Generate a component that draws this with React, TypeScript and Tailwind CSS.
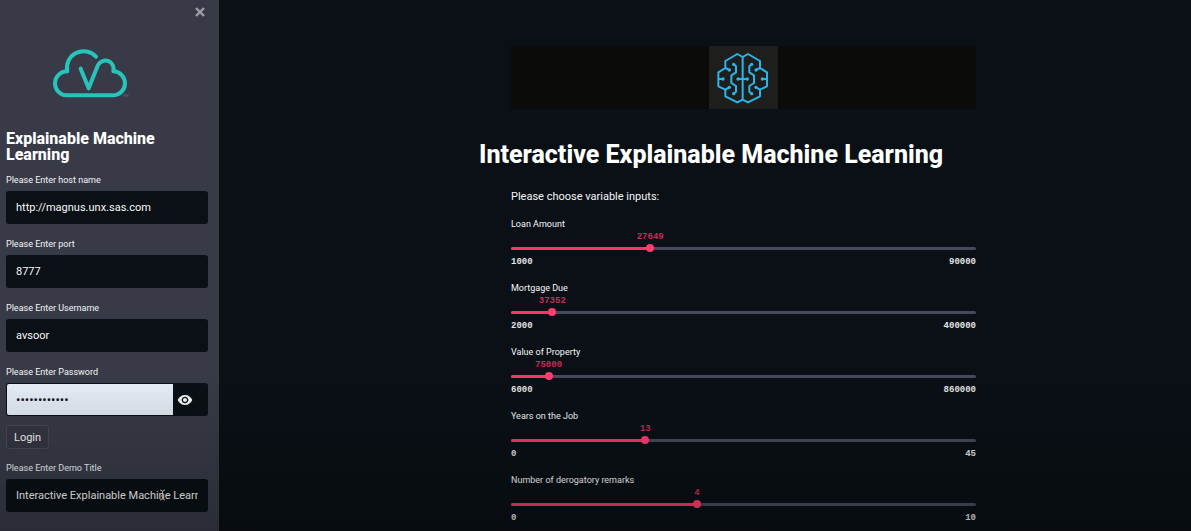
import { useState } from "react";
import { MdVisibility } from "react-icons/md";

const sliders = [
  { id: "loan", label: "Loan Amount", min: 1000, max: 90000, value: 27649 },
  { id: "mortgage", label: "Mortgage Due", min: 2000, max: 400000, value: 37352 },
  { id: "property", label: "Value of Property", min: 6000, max: 860000, value: 75000 },
  { id: "years", label: "Years on the Job", min: 0, max: 45, value: 13 },
  { id: "remarks", label: "Number of derogatory remarks", min: 0, max: 10, value: 4 },
];

function CloudLogo() {
  return (
    <svg viewBox="150 140 240 159" className="h-[53px] w-20" fill="none" aria-hidden="true">
      <path
        d="M288 169A50 50 0 0 0 202 213A36 36 0 0 0 200 285H338A36 36 0 0 0 340 213A25 25 0 0 0 294 194L266 264L242 205"
        stroke="#26c4bb"
        strokeWidth="12"
        strokeLinecap="round"
        strokeLinejoin="round"
      />
      <path d="M370 283H376M373 283V290M378 290V283L381 287L384 283V290" stroke="#6f727d" strokeWidth="1.5" />
    </svg>
  );
}

function BrainHalf() {
  return (
    <>
      <path d="M127 52L111 43L75 64V85L54 98V140L75 150V170L111 188L127 180" />
      <path d="M75 85L87 91M75 150L87 143M54 118H68M127 118H113" />
      <path d="M100 74L107 80V98L93 107V130L107 139V156L100 162" />
      <g fill="#2ab4ea" stroke="none">
        <circle cx="87" cy="91" r="5" />
        <circle cx="87" cy="143" r="5" />
        <circle cx="68" cy="118" r="5" />
        <circle cx="113" cy="118" r="5" />
        <circle cx="100" cy="74" r="5" />
        <circle cx="100" cy="162" r="5" />
      </g>
    </>
  );
}

function BrainLogo() {
  return (
    <svg
      viewBox="50 34 162 162"
      className="size-[54px]"
      fill="none"
      stroke="#2ab4ea"
      strokeWidth="6"
      strokeLinejoin="round"
      aria-hidden="true"
    >
      <path d="M127 52V180" />
      <BrainHalf />
      <g transform="translate(254 0) scale(-1 1)">
        <BrainHalf />
      </g>
    </svg>
  );
}

function Field({ id, label, value }: { id: string; label: string; value: string }) {
  return (
    <div className="flex flex-col gap-[5px]">
      <label htmlFor={id} className="text-[9px] leading-3 text-[#f3f4f7]">
        {label}
      </label>
      <input
        id={id}
        type="text"
        defaultValue={value}
        className="h-[33px] w-full rounded-[3px] bg-[#0a1015] px-2.5 text-[11px] text-[#f8f8f8] outline-none"
      />
    </div>
  );
}

function Slider({ id, label, min, max, value }: (typeof sliders)[number]) {
  const [current, setCurrent] = useState(value);
  const percent = ((current - min) / (max - min)) * 100;
  return (
    <div>
      <label htmlFor={id} className="block text-[9px] leading-3 text-[#f6f6f7]">
        {label}
      </label>
      <div className="relative h-3 font-['Liberation_Mono',monospace] text-[9px] leading-[14px] font-bold text-[#c92d57]">
        <output htmlFor={id} className="absolute -translate-x-1/2" style={{ left: `${percent}%` }}>
          {current}
        </output>
      </div>
      <div className="relative flex h-3 items-center">
        <div className="h-[3px] w-full overflow-hidden rounded-full bg-[#474a5b]">
          <div className="h-full bg-[#fb3568]" style={{ width: `${percent}%` }} />
        </div>
        <input
          id={id}
          type="range"
          min={min}
          max={max}
          value={current}
          onChange={(e) => setCurrent(Number(e.target.value))}
          className="absolute inset-y-0 -left-1 w-[calc(100%+8px)] cursor-pointer appearance-none bg-transparent outline-none [&::-webkit-slider-thumb]:size-2 [&::-webkit-slider-thumb]:appearance-none [&::-webkit-slider-thumb]:rounded-full [&::-webkit-slider-thumb]:bg-[#ff3d70]"
        />
      </div>
      <div className="mt-0.5 flex justify-between font-['Liberation_Mono',monospace] text-[9px] leading-3 font-bold text-[#e4e4e4]">
        <span>{min}</span>
        <span>{max}</span>
      </div>
    </div>
  );
}

export default function App() {
  return (
    <div className="relative flex min-h-screen bg-[#0a1016] font-[Roboto,sans-serif] text-white">
      <aside className="flex w-[219px] shrink-0 flex-col bg-[#383b47] pr-[11px] pb-4 pl-1.5">
        <div className="flex h-6 items-center justify-end">
          <button type="button" aria-label="Close sidebar" className="grid size-4 place-items-center text-[#9c9ea6]">
            <svg viewBox="0 0 10 10" className="size-2.5" stroke="currentColor" strokeWidth="2.4" aria-hidden="true">
              <path d="M1 1L9 9M9 1L1 9" />
            </svg>
          </button>
        </div>
        <div className="mt-[23px] pl-11">
          <CloudLogo />
        </div>
        <h1 className="mt-[31px] text-base leading-4 font-extrabold">Explainable Machine Learning</h1>
        <form className="mt-[11px] flex flex-col" onSubmit={(e) => e.preventDefault()}>
          <div className="flex flex-col gap-3.5">
            <Field id="host" label="Please Enter host name" value="http://magnus.unx.sas.com" />
            <Field id="port" label="Please Enter port" value="8777" />
            <Field id="user" label="Please Enter Username" value="avsoor" />
            <div className="flex flex-col gap-[5px]">
              <label htmlFor="password" className="text-[9px] leading-3 text-[#f3f4f7]">
                Please Enter Password
              </label>
              <div className="flex h-[33px] overflow-hidden rounded-[3px] bg-[#0a1015] p-px">
                <input
                  id="password"
                  type="password"
                  defaultValue="passwordpass"
                  className="min-w-0 flex-1 rounded-l-[2px] bg-linear-to-b from-[#e8eff9] to-[#e2eaf2] px-[9px] text-[13px] text-[#12161b] outline-none"
                />
                <button
                  type="button"
                  aria-label="Show password"
                  className="flex w-[34px] items-center pl-1 text-[#f3f3f3]"
                >
                  <MdVisibility className="size-4" />
                </button>
              </div>
            </div>
          </div>
          <button
            type="submit"
            className="mt-[9px] h-6 self-start rounded-[3px] border border-[#474a55] bg-[#343642] px-[7px] text-[11px] leading-none text-[#f8f8f8]"
          >
            Login
          </button>
          <div className="relative mt-[13px]">
            <Field id="title" label="Please Enter Demo Title" value="Interactive Explainable Machine Learning" />
            <svg
              viewBox="0 0 7 12"
              className="pointer-events-none absolute right-[42px] bottom-[11px] h-3 w-[7px]"
              fill="none"
              stroke="#c3c5c9"
              aria-hidden="true"
            >
              <path d="M1 1Q3.5 1 3.5 3Q3.5 1 6 1M3.5 2V10M1 11Q3.5 11 3.5 9Q3.5 11 6 11M2 7H5" />
            </svg>
          </div>
        </form>
      </aside>

      <main className="min-w-0 flex-1 pl-[77px]">
        <div className="mx-auto w-full max-w-[465px] pt-[46px]">
          <div className="flex h-[63px] justify-center bg-[#0b0b09]">
            <div className="grid w-[69px] place-items-center bg-[#1e1f1c]">
              <BrainLogo />
            </div>
          </div>
          <h2 className="mt-[30px] -ml-8 text-[25px] leading-8 font-extrabold whitespace-nowrap">
            Interactive Explainable Machine Learning
          </h2>
          <p className="mt-[18px] text-[11px] leading-4 text-[#f6f6f6]">Please choose variable inputs:</p>
          <div className="mt-[13px] flex flex-col gap-3.5">
            {sliders.map((s) => (
              <Slider key={s.id} {...s} />
            ))}
          </div>
        </div>
      </main>

      <div className="pointer-events-none absolute inset-x-0 bottom-0 h-40 bg-linear-to-b from-transparent to-black/25" />
    </div>
  );
}
